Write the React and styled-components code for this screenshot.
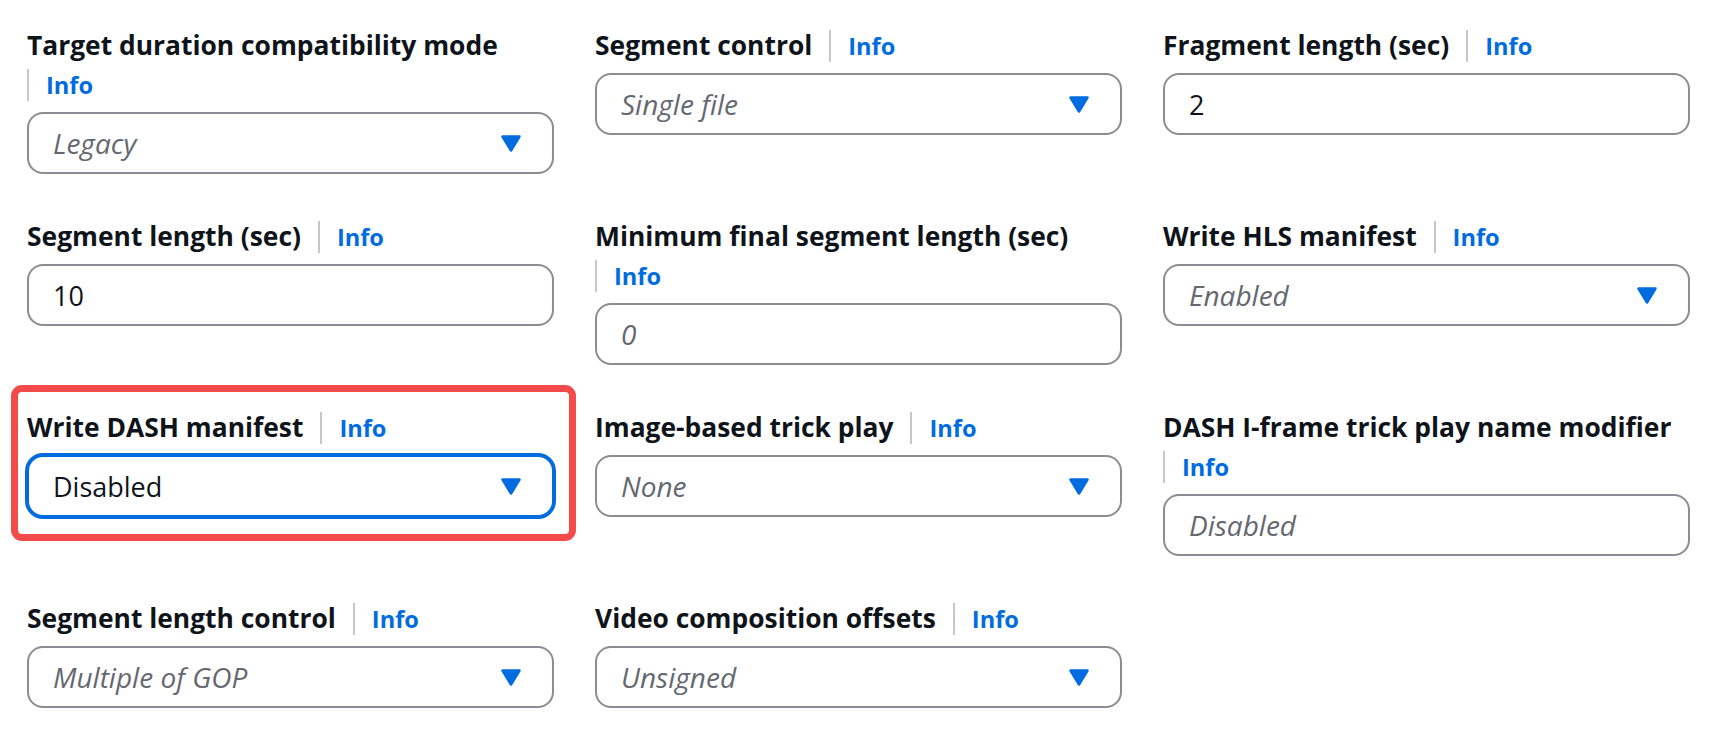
import React from "react";
import styled, { createGlobalStyle, css } from "styled-components";

const GlobalStyle = createGlobalStyle`
  html, body {
    margin: 0;
    padding: 0;
    background: #ffffff;
  }
  body {
    font-family: "Open Sans", "Noto Sans", "Liberation Sans", sans-serif;
    color: #0f141a;
  }
`;

const Form = styled.div`
  display: grid;
  grid-template-columns: repeat(3, 527px);
  column-gap: 41px;
  row-gap: 43px;
  align-items: start;
  padding: 26px 0 0 27px;
`;

const Field = styled.div`
  position: relative;
  display: flex;
  flex-direction: column;
  gap: 8px;

  ${(p) =>
    p.$highlight &&
    css`
      &::before {
        content: "";
        position: absolute;
        top: -23px;
        left: -16px;
        right: -22px;
        bottom: -24px;
        border: 7px solid #f24b4a;
        border-radius: 11px;
        pointer-events: none;
      }
    `}
`;

const LabelRow = styled.div`
  display: flex;
  flex-wrap: wrap;
  align-items: center;
`;

const LabelText = styled.span`
  font-size: 26.4px;
  font-weight: 700;
  line-height: 39px;
  color: #0f141a;
  margin-right: 17px;
  white-space: nowrap;
`;

const InfoLink = styled.a`
  display: flex;
  align-items: center;
  height: 39px;
  font-size: 23.6px;
  font-weight: 700;
  color: #006ce0;
  text-decoration: none;
  cursor: pointer;

  &::before {
    content: "";
    width: 2px;
    height: 32px;
    background: #c6c6cd;
    margin-right: 17px;
  }
`;

const Control = styled.div`
  box-sizing: border-box;
  height: 62px;
  display: flex;
  align-items: center;
  justify-content: space-between;
  padding: 0 31px 0 24px;
  border: 2px solid ${(p) => (p.$focused ? "#006ce0" : "#8c8c94")};
  border-radius: 16px;
  background: #ffffff;
  box-shadow: ${(p) => (p.$focused ? "0 0 0 2px #006ce0" : "none")};
  cursor: ${(p) => (p.$select ? "pointer" : "text")};
`;

const Value = styled.span`
  font-size: ${(p) => (p.$placeholder ? "28px" : "27px")};
  color: ${(p) => (p.$placeholder ? "#656871" : "#0f141a")};
  font-style: ${(p) => (p.$placeholder ? "italic" : "normal")};
  white-space: nowrap;
`;

function Caret() {
  return (
    <svg width="20" height="17" viewBox="0 0 20 17" aria-hidden="true">
      <polygon
        points="1.5,1.5 18.5,1.5 10,15.5"
        fill="#006ce0"
        stroke="#006ce0"
        strokeWidth="2.5"
        strokeLinejoin="round"
      />
    </svg>
  );
}

const fields = [
  { label: "Target duration compatibility mode", select: true, value: "Legacy", placeholder: true },
  { label: "Segment control", select: true, value: "Single file", placeholder: true },
  { label: "Fragment length (sec)", value: "2" },
  { label: "Segment length (sec)", value: "10" },
  { label: "Minimum final segment length (sec)", value: "0", placeholder: true },
  { label: "Write HLS manifest", select: true, value: "Enabled", placeholder: true },
  { label: "Write DASH manifest", select: true, value: "Disabled", focused: true, highlight: true },
  { label: "Image-based trick play", select: true, value: "None", placeholder: true },
  { label: "DASH I-frame trick play name modifier", value: "Disabled", placeholder: true },
  { label: "Segment length control", select: true, value: "Multiple of GOP", placeholder: true },
  { label: "Video composition offsets", select: true, value: "Unsigned", placeholder: true },
];

export default function App() {
  return (
    <>
      <GlobalStyle />
      <Form>
        {fields.map((f) => (
          <Field key={f.label} $highlight={f.highlight}>
            <LabelRow>
              <LabelText>{f.label}</LabelText>
              <InfoLink>Info</InfoLink>
            </LabelRow>
            <Control $focused={f.focused} $select={f.select}>
              <Value $placeholder={f.placeholder}>{f.value}</Value>
              {f.select && <Caret />}
            </Control>
          </Field>
        ))}
      </Form>
    </>
  );
}
